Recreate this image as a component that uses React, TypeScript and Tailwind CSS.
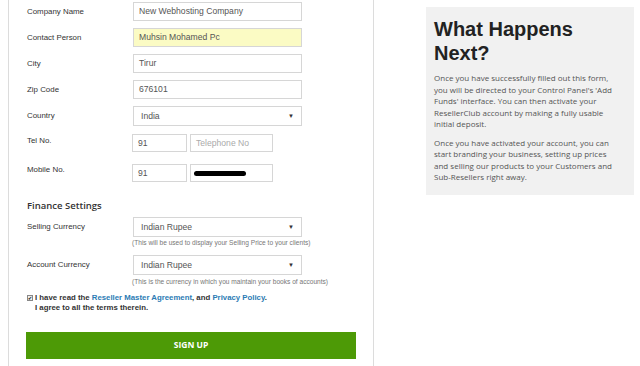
import React from "react";

const arial = { fontFamily: '"Liberation Sans", Arial, sans-serif' };
const open = { fontFamily: '"Open Sans", "Noto Sans", sans-serif' };

function Row({ label, children, top = 0, h = 19 }: { label: string; children: React.ReactNode; top?: number; h?: number }) {
  return (
    <div className="flex items-center" style={{ marginTop: top, height: h }}>
      <div className="w-[106px] text-[7.9px] text-[#333]">{label}</div>
      {children}
    </div>
  );
}

function Input({ value, w = "w-[169px]", yellow = false, placeholder = false }: { value: string; w?: string; yellow?: boolean; placeholder?: boolean }) {
  return (
    <div
      className={`${w} h-full border border-[#d6d6d6] flex items-center pl-[5px] text-[8.6px] ${
        yellow ? "bg-[#fbfbc4]" : "bg-white"
      } ${placeholder ? "text-[#aaa]" : "text-[#555]"}`}
    >
      {value}
    </div>
  );
}

function Select({ value }: { value: string }) {
  return (
    <div className="w-[169px] h-full border border-[#d6d6d6] bg-white flex items-center justify-between pl-[7px] pr-[7px] text-[8.6px] text-[#555]">
      <span>{value}</span>
      <span className="text-[6px] text-[#333]">▼</span>
    </div>
  );
}

export default function App() {
  return (
    <div className="w-[640px] h-[366px] bg-white flex overflow-hidden" style={arial}>
      <div className="ml-[8px] w-[366px] h-full border-l border-r border-[#dcdcdc] pl-[18px] pt-[2px] flex flex-col">
        <Row label="Company Name">
          <Input value="New Webhosting Company" />
        </Row>
        <Row label="Contact Person" top={7}>
          <Input value="Muhsin Mohamed Pc" yellow />
        </Row>
        <Row label="City" top={7}>
          <Input value="Tirur" />
        </Row>
        <Row label="Zip Code" top={7}>
          <Input value="676101" />
        </Row>
        <Row label="Country" top={7} h={20}>
          <Select value="India" />
        </Row>
        <div className="flex mt-[8px] h-[18px]">
          <div className="w-[105px] text-[7.9px] text-[#333] pt-[1px]">Tel No.</div>
          <div className="flex gap-[3px] h-full">
            <Input value="91" w="w-[55px]" />
            <Input value="Telephone No" w="w-[83px]" placeholder />
          </div>
        </div>
        <div className="flex mt-[12px] h-[18px]">
          <div className="w-[105px] text-[7.9px] text-[#333]">Mobile No.</div>
          <div className="flex gap-[3px] h-full">
            <Input value="91" w="w-[55px]" />
            <div className="w-[83px] h-full border border-[#d6d6d6] bg-white flex items-center pl-[3px]">
              <div className="w-[52px] h-[5px] rounded-full bg-black" />
            </div>
          </div>
        </div>
        <div className="mt-[17px] text-[9.5px] font-semibold text-[#333]" style={open}>
          Finance Settings
        </div>
        <Row label="Selling Currency" top={4} h={20}>
          <Select value="Indian Rupee" />
        </Row>
        <div className="ml-[105px] mt-[1px] text-[6.6px] text-[#777]">
          (This will be used to display your Selling Price to your clients)
        </div>
        <Row label="Account Currency" top={7} h={20}>
          <Select value="Indian Rupee" />
        </Row>
        <div className="ml-[105px] mt-[2px] text-[6.6px] text-[#777]">
          (This is the currency in which you maintain your books of accounts)
        </div>
        <div className="mt-[6px] flex text-[7.8px] font-bold text-[#333] leading-[10px]">
          <div className="w-[6px] h-[6px] mt-[2px] mr-[2px] border border-[#888] bg-[#eee] flex items-center justify-center text-[5px] leading-none">
            ✔
          </div>
          <div>
            <div>
              I have read the <span className="text-[#2b7bb4]">Reseller Master Agreement</span>, and{" "}
              <span className="text-[#2b7bb4]">Privacy Policy</span>.
            </div>
            <div>I agree to all the terms therein.</div>
          </div>
        </div>
        <div
          className="mt-[19px] -ml-[1px] w-[330px] h-[27px] bg-[#4d9a06] flex items-center justify-center text-white text-[8.5px] font-bold"
          style={open}
        >
          SIGN UP
        </div>
      </div>
      <div className="ml-[52px] mt-[7px] w-[208px] h-[188px] bg-[#f1f1f1] pl-[8px] pr-[12px] pt-[10px]" style={open}>
        <div className="text-[20px] font-bold text-[#222] leading-[24px]" style={arial}>
          What Happens
          <br />
          Next?
        </div>
        <p className="mt-[7px] text-[8px] leading-[11.5px] text-[#555]">
          Once you have successfully filled out this form, you will be directed to your Control Panel's 'Add Funds' interface. You can then activate your ResellerClub account by making a fully usable initial deposit.
        </p>
        <p className="mt-[7px] text-[8px] leading-[11.5px] text-[#555]">
          Once you have activated your account, you can start branding your business, setting up prices and selling our products to your Customers and Sub-Resellers right away.
        </p>
      </div>
    </div>
  );
}
